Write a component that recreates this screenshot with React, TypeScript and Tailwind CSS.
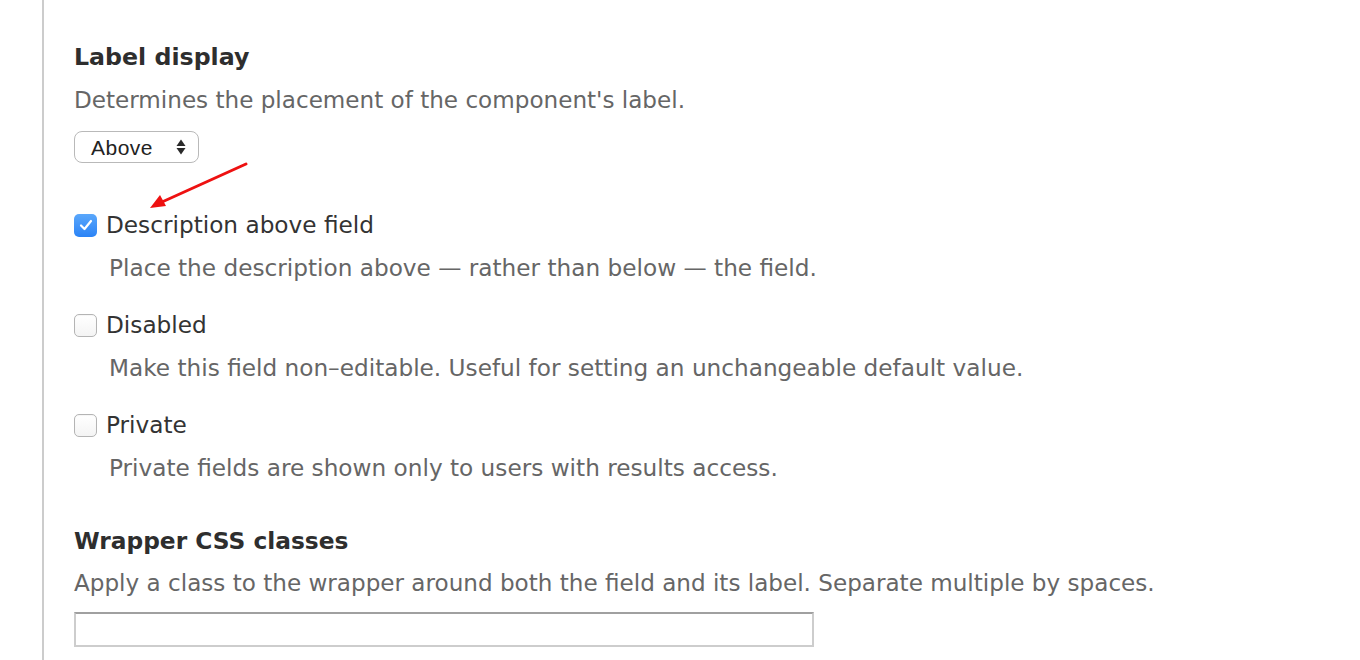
import React from "react";

const font = { fontFamily: '"DejaVu Sans", Verdana, sans-serif' };

function CheckBox({ checked }: { checked?: boolean }) {
  if (checked) {
    return (
      <span className="flex h-[23px] w-[23px] shrink-0 items-center justify-center rounded-[5px] bg-gradient-to-b from-[#5aa7fb] to-[#2a83f6]">
        <svg width="16" height="14" viewBox="0 0 16 14">
          <path d="M3 7.5 L6.5 11 L13 3" fill="none" stroke="#fff" strokeWidth="2.2" strokeLinecap="round" strokeLinejoin="round" />
        </svg>
      </span>
    );
  }
  return (
    <span className="block h-[23px] w-[23px] shrink-0 rounded-[5px] border border-[#b4b4b4] bg-gradient-to-b from-white to-[#f4f4f4] shadow-[inset_0_1px_1px_rgba(0,0,0,0.04)]" />
  );
}

function CheckRow({ label, desc, checked, mt }: { label: string; desc: string; checked?: boolean; mt: string }) {
  return (
    <div className={mt}>
      <div className="flex h-[28px] items-center gap-[9px]">
        <CheckBox checked={checked} />
        <span className="text-[23.2px] leading-[28px] text-[#333]">{label}</span>
      </div>
      <div className="mt-[15px] pl-[35px] text-[23.2px] leading-[28px] text-[#666]">{desc}</div>
    </div>
  );
}

export default function App() {
  return (
    <div className="relative h-[660px] w-[1360px] overflow-hidden bg-white" style={font}>
      <div className="ml-[42px] h-full border-l-2 border-[#cccccc] pl-[30px] pt-[43px]">
        <div className="text-[23.7px] font-bold leading-[28px] text-[#2e2e2e]">Label display</div>
        <div className="mt-[15px] text-[23.1px] leading-[28px] text-[#666]">
          Determines the placement of the component's label.
        </div>
        <div className="mt-[17px] flex h-[32px] w-[125px] items-center justify-between rounded-[8px] border border-[#b9b9b9] bg-white pl-[16px] pr-[12px]">
          <span
            className="text-[21px] leading-[21px] tracking-[0.5px] text-[#222]"
            style={{ fontFamily: '"Liberation Sans", Arial, sans-serif' }}
          >
            Above
          </span>
          <svg width="10" height="18" viewBox="0 0 10 18">
            <path d="M5 1.5 L9.5 8 L0.5 8 Z" fill="#2a2a2a" />
            <path d="M5 16.5 L9.5 10 L0.5 10 Z" fill="#2a2a2a" />
          </svg>
        </div>

        <CheckRow mt="mt-[48px]" checked label="Description above field" desc="Place the description above — rather than below — the field." />
        <CheckRow mt="mt-[29px]" label="Disabled" desc="Make this field non–editable. Useful for setting an unchangeable default value." />
        <CheckRow mt="mt-[29px]" label="Private" desc="Private fields are shown only to users with results access." />

        <div className="mt-[45px] text-[23.3px] font-bold leading-[28px] text-[#2e2e2e]">Wrapper CSS classes</div>
        <div className="mt-[14px] text-[23.1px] leading-[28px] text-[#666]">
          Apply a class to the wrapper around both the field and its label. Separate multiple by spaces.
        </div>
        <div className="mt-[15px] h-[35px] w-[740px] border-2 border-[#cdcdcd] border-t-[#a0a0a0] bg-white" />
      </div>

      <svg className="pointer-events-none absolute left-0 top-0" width="1360" height="660">
        <line x1="246" y1="164" x2="162" y2="202" stroke="#ee1111" strokeWidth="3" strokeLinecap="round" />
        <path d="M150 208 L160 195 L166 206 Z" fill="#ee1111" />
      </svg>
    </div>
  );
}
